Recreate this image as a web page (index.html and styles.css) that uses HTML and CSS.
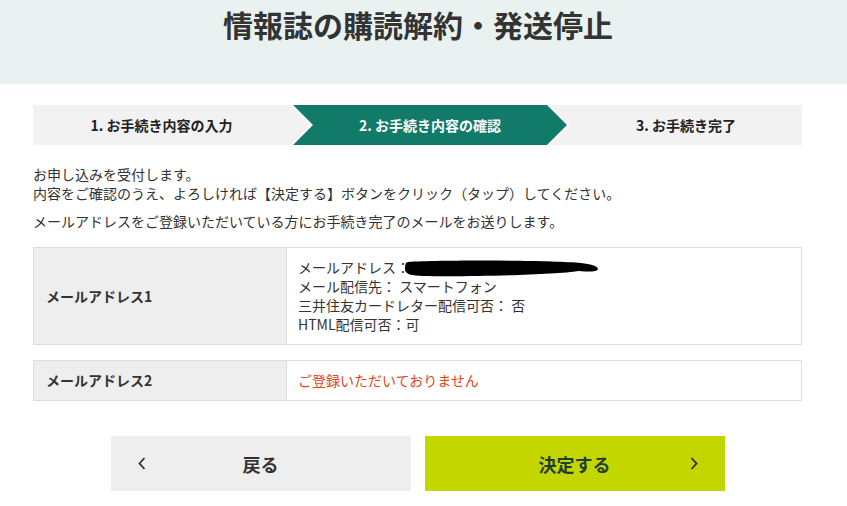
FILE: index.html
```html
<!DOCTYPE html>
<html lang="ja">
<head>
  <meta charset="UTF-8">
  <meta name="viewport" content="width=device-width, initial-scale=1">
  <title>情報誌の購読解約・発送停止</title>
  <link rel="stylesheet" href="styles.css">
</head>
<body>
  <header class="page-head">
    <h1>情報誌の購読解約・発送停止</h1>
  </header>

  <div class="container">
    <ol class="steps">
      <li class="step step-1">1. お手続き内容の入力</li>
      <li class="step step-2 current">2. お手続き内容の確認</li>
      <li class="step step-3">3. お手続き完了</li>
    </ol>

    <p class="lead">お申し込みを受付します。<br>内容をご確認のうえ、よろしければ【決定する】ボタンをクリック（タップ）してください。</p>
    <p class="note">メールアドレスをご登録いただいている方にお手続き完了のメールをお送りします。</p>

    <table class="info">
      <tr>
        <th>メールアドレス1</th>
        <td>
          メールアドレス：<svg class="mask" width="196" height="17" viewBox="0 0 196 17"><path d="M5 2 C 40 0, 150 0, 178 3 C 187 4, 195 6, 195 9 C 194 12, 186 12, 176 11 C 150 15, 60 17, 20 16 C 8 16, 1 14, 2 8 C 2 4, 3 2, 5 2 Z" fill="#000"/></svg><br>
          メール配信先： スマートフォン<br>
          三井住友カードレター配信可否： 否<br>
          HTML配信可否：可
        </td>
      </tr>
    </table>

    <table class="info">
      <tr>
        <th>メールアドレス2</th>
        <td class="empty">ご登録いただいておりません</td>
      </tr>
    </table>

    <div class="actions">
      <button type="button" class="btn btn-back">
        <svg class="ico" width="8" height="13" viewBox="0 0 8 13"><path d="M6.5 1 L1.5 6.5 L6.5 12" fill="none" stroke="#333" stroke-width="1.8"/></svg>
        <span class="label">戻る</span>
        <span class="ico"></span>
      </button>
      <button type="button" class="btn btn-submit">
        <span class="ico"></span>
        <span class="label">決定する</span>
        <svg class="ico" width="8" height="13" viewBox="0 0 8 13"><path d="M1.5 1 L6.5 6.5 L1.5 12" fill="none" stroke="#2b2b2b" stroke-width="1.8"/></svg>
      </button>
    </div>
  </div>
</body>
</html>
```

FILE: styles.css
```css
* {
  box-sizing: border-box;
}
body {
  margin: 0;
  font-family: "Noto Sans CJK JP", "Noto Sans", sans-serif;
  font-size: 14px;
  color: #333;
  background: #fff;
}
.page-head {
  background: #e9f2f1;
  padding: 0 11px 36px 0;
  text-align: center;
}
.page-head h1 {
  margin: 0;
  font-size: 30px;
  line-height: 48px;
  color: #333;
}
.container {
  width: 769px;
  margin: 21px 0 0 33px;
}
.steps {
  display: flex;
  height: 40px;
  margin: 0;
  padding: 0;
  list-style: none;
}
.step {
  display: flex;
  align-items: center;
  justify-content: center;
  background: #f2f2f2;
  color: #222;
  font-weight: bold;
  font-size: 14px;
}
.step-1 {
  flex: 0 0 277px;
  padding-right: 20px;
  clip-path: polygon(0 0, calc(100% - 20px) 0, 100% 50%, calc(100% - 20px) 100%, 0 100%);
}
.step-2 {
  flex: 0 0 274px;
  margin-left: -17px;
  padding: 0 20px;
  clip-path: polygon(0 0, calc(100% - 20px) 0, 100% 50%, calc(100% - 20px) 100%, 0 100%, 20px 50%);
}
.step-3 {
  flex: 0 0 252px;
  margin-left: -17px;
  padding-left: 20px;
  clip-path: polygon(0 0, 100% 0, 100% 100%, 0 100%, 20px 50%);
}
.step.current {
  background: #127a69;
  color: #fff;
}
.lead {
  margin: 20px 0 0;
  line-height: 19px;
}
.note {
  margin: 9px 0 0;
  line-height: 19px;
}
.info {
  width: 100%;
  border-collapse: collapse;
  margin-top: 16px;
}
.info + .info {
  margin-top: 15px;
}
.info th,
.info td {
  border: 1px solid #ddd;
  padding: 10px 11px;
  line-height: 19px;
  text-align: left;
  vertical-align: middle;
}
.info th {
  width: 253px;
  padding-left: 12px;
  background: #eee;
  color: #333;
}
.info td {
  font-weight: normal;
}
.mask {
  margin-left: -7px;
  vertical-align: -4px;
}
.empty {
  color: #e2461d;
}
.actions {
  display: flex;
  justify-content: center;
  gap: 14px;
  margin: 35px 0 0;
}
.btn {
  display: flex;
  align-items: center;
  width: 300px;
  height: 55px;
  padding: 0 27px;
  border: none;
  font-family: inherit;
  font-size: 18px;
  font-weight: bold;
  cursor: pointer;
}
.btn .label {
  flex: 1;
  text-align: center;
}
.btn .ico {
  width: 8px;
  flex: 0 0 8px;
}
.btn-back {
  background: #eee;
  color: #333;
}
.btn-submit {
  background: #c4d600;
  color: #1e3f31;
}
```
